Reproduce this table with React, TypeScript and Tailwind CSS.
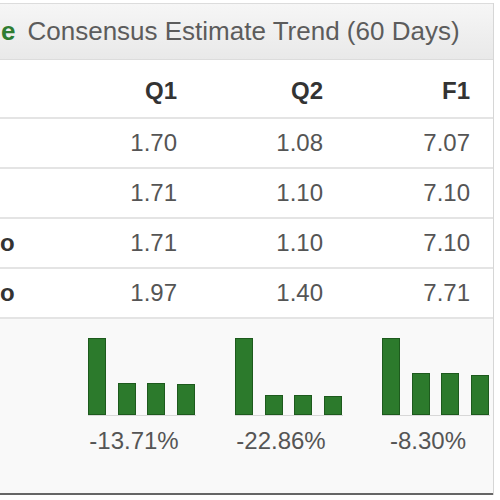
const rows = [
  { label: "", q1: "1.70", q2: "1.08", f1: "7.07" },
  { label: "", q1: "1.71", q2: "1.10", f1: "7.10" },
  { label: "o", q1: "1.71", q2: "1.10", f1: "7.10" },
  { label: "o", q1: "1.97", q2: "1.40", f1: "7.71" },
]

const trends = [
  { bars: [77, 32, 32, 31], pct: "-13.71%" },
  { bars: [77, 20, 20, 19], pct: "-22.86%" },
  { bars: [77, 42, 42, 40], pct: "-8.30%" },
]

export default function App() {
  return (
    <div className="w-[500px] h-[500px] overflow-hidden bg-white font-['Liberation_Sans',Arial,sans-serif]">
      <div className="w-[494px] border-r border-[#d6d6d6]">
        <div className="mt-[3px] h-[57px] flex items-center bg-gradient-to-b from-[#f6f6f6] to-[#e9e9e9] border-t border-b border-[#dcdcdc] text-[26px] text-[#5c5c5c] whitespace-nowrap">
          <span className="font-bold text-[#2f7d32] ml-[1px]">e</span>
          <span className="ml-[12px]">Consensus Estimate Trend (60 Days)</span>
        </div>

        <div className="grid grid-cols-[31px_146px_146px_147px] h-[57px] items-end pb-[8px] text-[24px] font-bold text-[#333]">
          <div></div>
          <div className="text-right">Q1</div>
          <div className="text-right">Q2</div>
          <div className="text-right">F1</div>
        </div>

        {rows.map((r, i) => (
          <div
            key={i}
            className="grid grid-cols-[31px_146px_146px_147px] h-[50px] items-center border-t-2 border-[#e4e4e4] text-[24px] text-[#555]"
          >
            <div className="font-bold text-[#333]">{r.label}</div>
            <div className="text-right">{r.q1}</div>
            <div className="text-right">{r.q2}</div>
            <div className="text-right">{r.f1}</div>
          </div>
        ))}

        <div className="h-[176px] border-t-2 border-[#e4e4e4] bg-[#f9f9f9] pt-[19px] pl-[88px] flex gap-[39px]">
          {trends.map((t, i) => (
            <div key={i} className="w-[108px] flex flex-col">
              <div className="h-[78px] flex items-end gap-[11.5px] border-b border-[#d8d8d8]">
                {t.bars.map((h, j) => (
                  <div
                    key={j}
                    className="w-[18px] bg-[#2c7a2c] border border-[#1d5a1d]"
                    style={{ height: h }}
                  />
                ))}
              </div>
              <div className="w-[92px] flex justify-center mt-[7px] text-[24px] text-[#555] whitespace-nowrap">
                {t.pct}
              </div>
            </div>
          ))}
        </div>
        <div className="h-[2px] bg-[#666]" />
      </div>
    </div>
  )
}
